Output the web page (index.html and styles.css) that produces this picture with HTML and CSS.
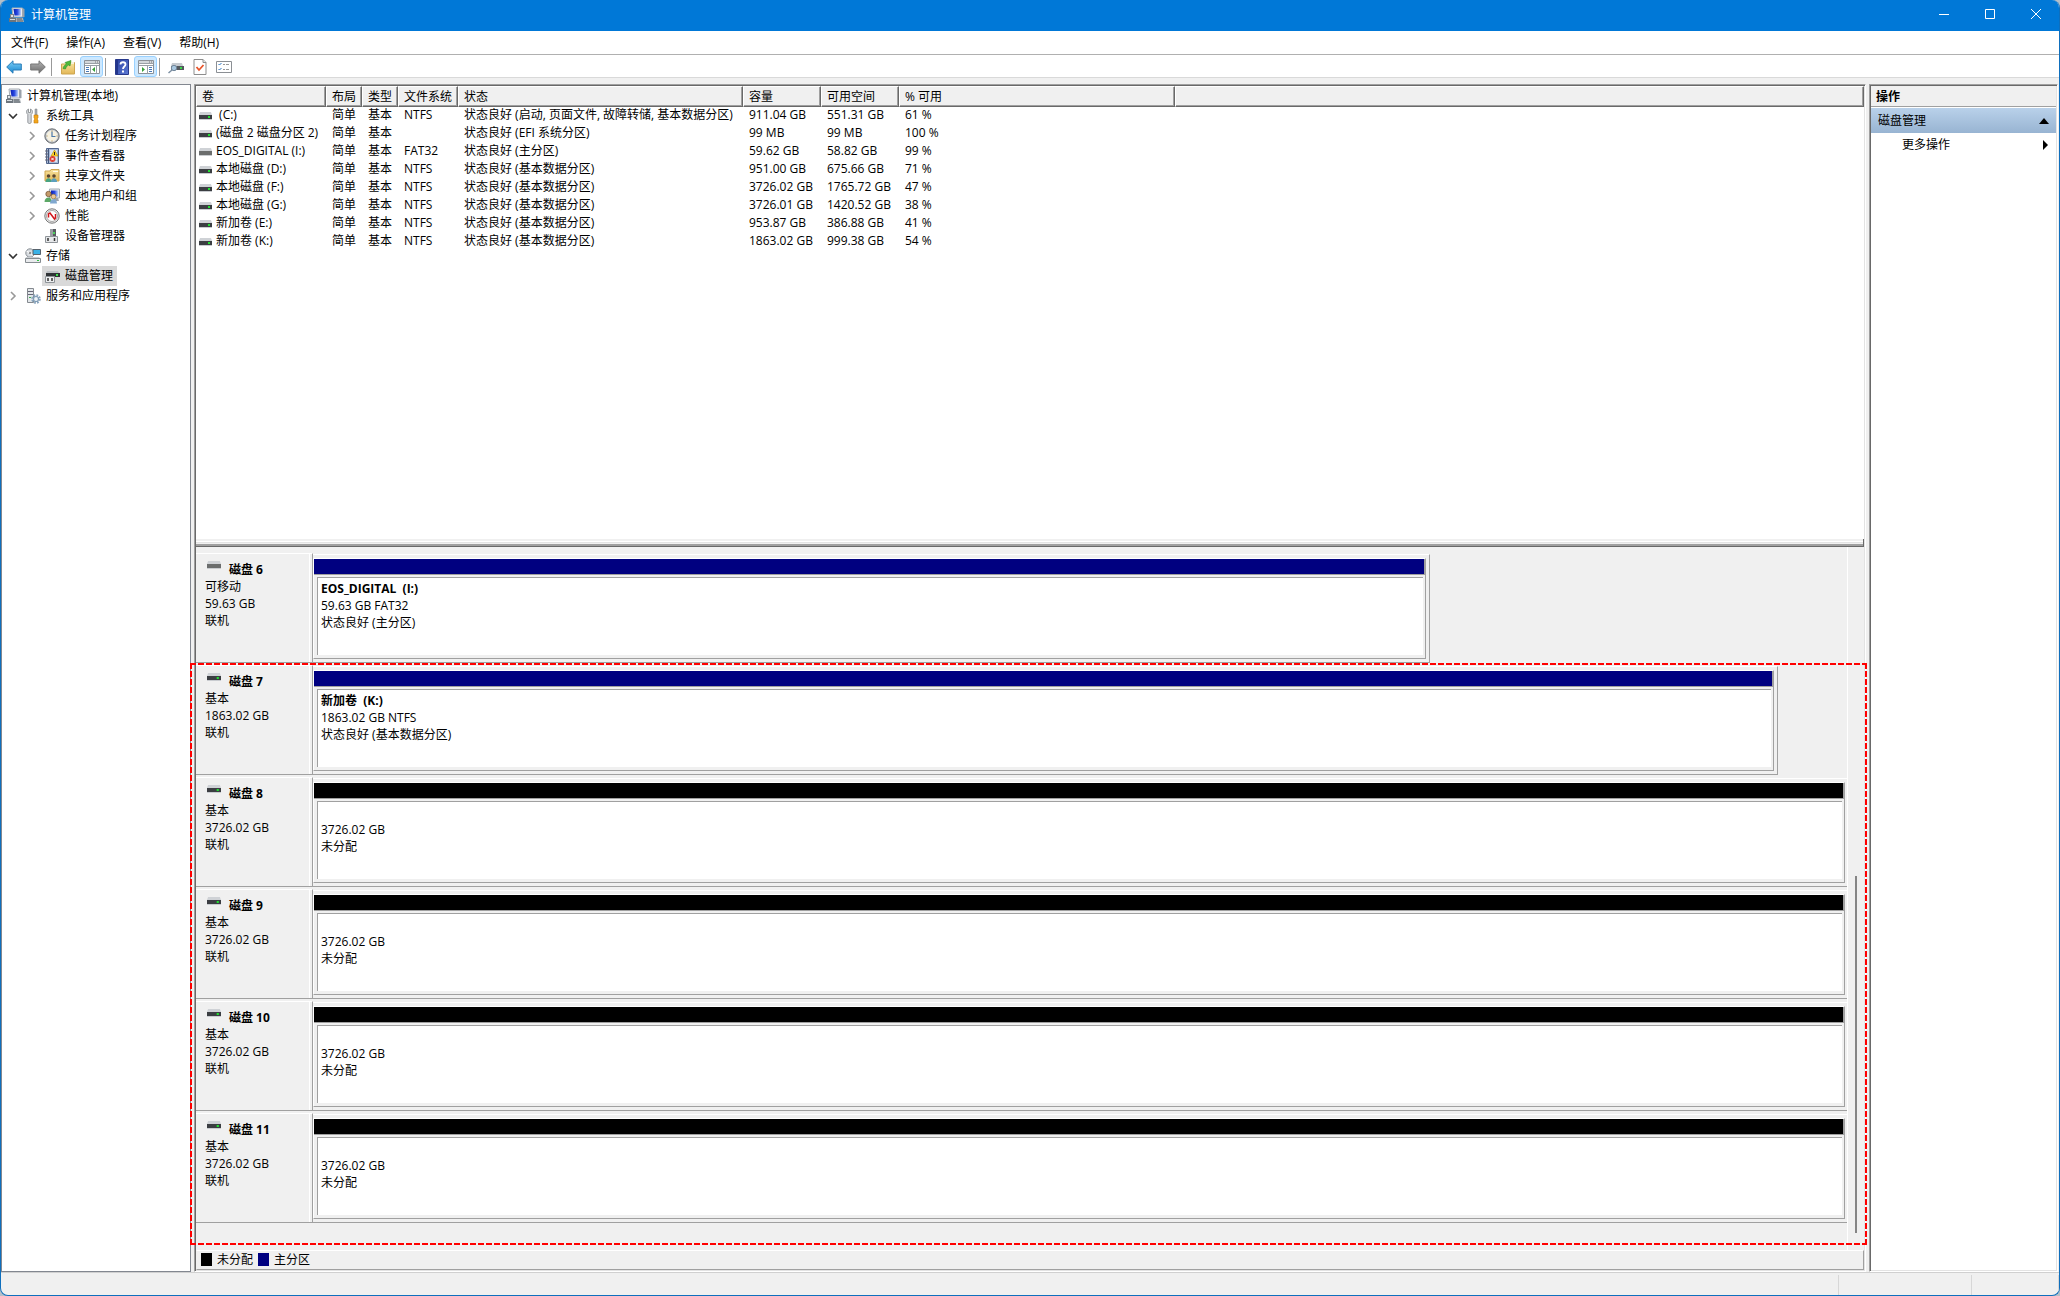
FILE: index.html
```html
<!DOCTYPE html>
<html lang="zh-CN">
<head>
  <meta charset="utf-8">
  <title>计算机管理</title>
  <link rel="stylesheet" href="styles.css">
</head>
<body>

<svg class="sprite" aria-hidden="true">
  <defs>
    <linearGradient id="gBlue" x1="0" y1="0" x2="0" y2="1"><stop offset="0" stop-color="#7fd0f7"/><stop offset="1" stop-color="#1585cf"/></linearGradient>
    <linearGradient id="gGray" x1="0" y1="0" x2="0" y2="1"><stop offset="0" stop-color="#b5b5b5"/><stop offset="1" stop-color="#6b6b6b"/></linearGradient>
    <linearGradient id="gScreen" x1="0" y1="0" x2="1" y2="0"><stop offset="0" stop-color="#0a1fb4"/><stop offset=".5" stop-color="#2747e0"/><stop offset="1" stop-color="#b9d0fa"/></linearGradient>
    <linearGradient id="gHelp" x1="0" y1="0" x2="1" y2="1"><stop offset="0" stop-color="#2a3f9e"/><stop offset="1" stop-color="#5d7bd6"/></linearGradient>
    <linearGradient id="gFolder" x1="0" y1="0" x2="0" y2="1"><stop offset="0" stop-color="#f8e3a0"/><stop offset="1" stop-color="#e3b756"/></linearGradient>
  </defs>
  <symbol id="computer" viewBox="0 0 16 16">
    <path d="M3 1h10.500v9H4z" fill="#e8ebef" stroke="#a7adb5"/>
    <path d="M4.500 2h7.500v6.500H5.500z" fill="url(#gScreen)"/>
    <path d="M13.500 1l2 1v8l-2 .5z" fill="#9aa1aa"/>
    <path d="M1 7h4v4H1z" fill="#7c848c"/><path d="M2 8h2v2H2z" fill="#dfe4e8"/>
    <path d="M0 11h7v4H0z" fill="#6d757d"/><path d="M1 12h5v1H1z" fill="#d5dade"/>
    <path d="M7 11h7l1 4H7z" fill="#a9afb5"/><path d="M8 12h5M8 14h6" stroke="#5c646b"/>
  </symbol>
  <symbol id="back" viewBox="0 0 16 16"><path d="M.7 8L7 1.800V5h8.300v6H7v3.200z" fill="url(#gBlue)" stroke="#2a7db8" stroke-linejoin="round"/></symbol>
  <symbol id="forward" viewBox="0 0 16 16"><path d="M15.300 8L9 1.800V5H.7v6H9v3.200z" fill="url(#gGray)" stroke="#777" stroke-linejoin="round"/></symbol>
  <symbol id="up" viewBox="0 0 16 16">
    <path d="M1.500 5h5l1-1.500h7V15h-13z" fill="url(#gFolder)" stroke="#cda550"/>
    <path d="M11 3h3v2h-3z" fill="#f6f0da"/>
    <path d="M3 9.500C3.500 7 5 6 6.500 5L5 3.500 11 1.500 10 7 8.500 6C7 7 6 8 5.500 10z" fill="#4fba3c" stroke="#2e8d23" stroke-width=".6"/>
  </symbol>
  <symbol id="tree-pane" viewBox="0 0 16 14">
    <path d="M.5.500h15v13H.5z" fill="#fff" stroke="#8b9198"/><path d="M1 1h14v2H1z" fill="#d2d6da"/><path d="M11 2h1M13 2h1" stroke="#777"/>
    <path d="M.5 3.500h15M6.500 5.500v8M1 5.500h14" stroke="#9aa0a6"/><path d="M2 7.500h3M2 9.500h3M2 11.500h3" stroke="#4779b8"/><path d="M11 7v5L8 9.500z" fill="#36a13a"/>
    <path d="M12.500 6v7.500" stroke="#9aa0a6"/>
  </symbol>
  <symbol id="action-pane" viewBox="0 0 16 14">
    <path d="M.5.500h15v13H.5z" fill="#fff" stroke="#8b9198"/><path d="M1 1h14v2H1z" fill="#d2d6da"/><path d="M11 2h1M13 2h1" stroke="#777"/>
    <path d="M.5 3.500h15M9.500 5.500v8M1 5.500h14" stroke="#9aa0a6"/><path d="M11 7.500h3M11 9.500h3M11 11.500h3" stroke="#4779b8"/><path d="M4 7v5l3-2.500z" fill="#36a13a"/>
  </symbol>
  <symbol id="help" viewBox="0 0 14 16">
    <path d="M.5.500h13v15H.5z" fill="url(#gHelp)" stroke="#28398c"/><path d="M1 1h2v14H1z" fill="#22358b"/>
    <path d="M5.500 5.500C5.500 2.500 10.500 2.500 10.500 5.500 10.500 7.500 8 7.500 8 10" fill="none" stroke="#fff" stroke-width="1.800"/><path d="M7 11.500h2v2H7z" fill="#fff"/>
  </symbol>
  <symbol id="drive-find" viewBox="0 0 16 14">
    <path d="M4 3h10l1 3H3z" fill="#c6cacf"/><path d="M3 6h13v4H3z" fill="#53585d"/><path d="M12 7h2v2h-2z" fill="#3bd64b"/>
    <circle cx="6" cy="8" r="2.700" fill="#a9c8e0" stroke="#73879a"/><path d="M4 10l-3.500 3" stroke="#7c8fa3" stroke-width="1.500"/>
  </symbol>
  <symbol id="doc-check" viewBox="0 0 13 16"><path d="M.5.500h9l3 3v12H.5z" fill="#fff" stroke="#8d8d8d"/><path d="M9.500.500v3h3" fill="#e4e4e4" stroke="#8d8d8d"/><path d="M3 8l2.500 3 4.500-5" fill="none" stroke="#e8542a" stroke-width="1.800"/></symbol>
  <symbol id="list" viewBox="0 0 16 12"><path d="M.5.500h15v11H.5z" fill="#fff" stroke="#8b8f94"/><path d="M2.500 3l1 1L5.500 2M2.500 8l1 1L5.500 7" fill="none" stroke="#2f77c2"/><path d="M7 3.500h2M10 3.500h3M7 8.500h2M10 8.500h3" stroke="#999"/></symbol>
  <symbol id="tools" viewBox="0 0 16 16">
    <path d="M3.500 1v3.500h2V1C8 2 8 5 6.200 6.500V14c0 2-3.400 2-3.400 0V6.500C1 5 1 2 3.500 1z" fill="#d4d7da" stroke="#83888c" stroke-width=".8"/>
    <path d="M10 1h2v6h-2z" fill="#a8adb2" stroke="#7c8185" stroke-width=".5"/><path d="M9 7h4v3l-1 1 1 1v3H9v-3l1-1-1-1z" fill="#f2a51c" stroke="#c67d0c" stroke-width=".6"/>
  </symbol>
  <symbol id="clock" viewBox="0 0 16 16"><circle cx="8" cy="8" r="7.200" fill="#989ca1" stroke="#73777b"/><circle cx="8" cy="8" r="5.800" fill="#f7f1df" stroke="#d9dcdf"/><path d="M8 3.500V8.500h3.500" fill="none" stroke="#4a78aa" stroke-width="1.200"/><path d="M8 2.500v1M8 12.500v1M2.500 8h1M12.500 8h1" stroke="#a88d4c"/></symbol>
  <symbol id="events" viewBox="0 0 16 16">
    <path d="M2.500.500h12v15h-12z" fill="#a9bad6" stroke="#53678d"/><path d="M4.500 1v14" stroke="#43567c"/><path d="M6 2h7v12H6z" fill="#dbe4f1"/>
    <path d="M1 3h3M1 6h3M1 9h3M1 12h3" stroke="#667"/><path d="M10.500 2l3.500 6H7z" fill="#ffd428" stroke="#b9900a" stroke-width=".6"/><path d="M10.500 4v3" stroke="#222"/>
    <circle cx="8.500" cy="11" r="3" fill="#dc3b2d"/><path d="M7.300 9.800l2.400 2.400M9.700 9.800l-2.400 2.400" stroke="#fff"/>
  </symbol>
  <symbol id="shared" viewBox="0 0 16 16">
    <path d="M1 3h5l1-1.500h8V13H1z" fill="url(#gFolder)" stroke="#cda550"/><path d="M9 3h5v1H9z" fill="#fffbe8"/>
    <circle cx="4.500" cy="8" r="1.800" fill="#5a4631"/><path d="M1.500 14c0-5 6-5 6 0z" fill="#48a482"/><circle cx="10" cy="8" r="1.800" fill="#5a4631"/><path d="M7 14c0-5 6-5 6 0z" fill="#5b9fbd"/>
  </symbol>
  <symbol id="users" viewBox="0 0 16 16">
    <path d="M5.500 1h10v9h-10z" fill="#dfe4ea" stroke="#a3abb4"/><path d="M7 2.500h7v6H7z" fill="url(#gScreen)"/><path d="M10 10h4l1 3h-5z" fill="#9ca3aa"/>
    <circle cx="4.500" cy="6" r="2.700" fill="#c49a6b" stroke="#6d4b2b" stroke-width=".7"/><path d="M.5 14c0-6 7.500-6 7.500 0z" fill="#5ca867"/>
    <circle cx="9.500" cy="8.500" r="2.300" fill="#edc795" stroke="#a07c3c" stroke-width=".7"/><path d="M6 15.500c0-6 7-6 7 0z" fill="#80a8d0"/>
  </symbol>
  <symbol id="perf" viewBox="0 0 16 16"><circle cx="8" cy="8" r="7.200" fill="#ededed" stroke="#777"/><circle cx="8" cy="8" r="5.500" fill="#fff" stroke="#aaa"/><path d="M4.500 9.500V6L6 5l4.500 6 1-1V6" fill="none" stroke="#d1161b" stroke-width="1.500"/></symbol>
  <symbol id="device" viewBox="0 0 16 16">
    <path d="M6 1h6v9H6z" fill="#575b60"/><path d="M6 1h3v9H6z" fill="#9a9ea3"/><path d="M9 4h2v2H9z" fill="#4bd05a"/>
    <path d="M1.500 8.500h12v6h-12z" fill="#e6e8ea" stroke="#8f9499"/><path d="M4 10v3M10.500 10v3" stroke="#333" stroke-width="1.500"/>
  </symbol>
  <symbol id="storage" viewBox="0 0 16 16">
    <circle cx="5" cy="5" r="4.200" fill="#d8dce0" stroke="#888e94"/><path d="M5 5l-3.500-2M5 5l3 2.500" stroke="#fff"/><circle cx="5" cy="5" r="1" fill="#777"/>
    <path d="M8 1.500h7.500v5H8z" fill="#39b1e6" stroke="#57636d"/><path d="M1 9h13l1.500 2H0z" fill="#c9cdd1"/><path d="M.5 10.500h15v4H.5z" fill="#e9ebed" stroke="#868c91"/><path d="M12 12h2v1h-2z" fill="#2fc242"/>
  </symbol>
  <symbol id="disk-mgmt" viewBox="0 0 16 16">
    <path d="M3 3h11l1 2H2z" fill="#bcc0c4"/><path d="M2 5h14v4H2z" fill="#303336"/><path d="M12 6h2v2h-2z" fill="#3ee04c"/>
    <path d="M1.500 8.500h9v6h-9z" fill="#eceeef" stroke="#8f9499"/><path d="M4 10v3M8 10v3" stroke="#333" stroke-width="1.500"/>
  </symbol>
  <symbol id="services" viewBox="0 0 16 16">
    <path d="M2.500.500h6v14h-6z" fill="#e3e7ea" stroke="#84898f"/><path d="M3 3.500h5M3 6.500h5" stroke="#667"/><path d="M4 9.500h2" stroke="#3bae4b"/>
    <circle cx="11" cy="11" r="3.600" fill="none" stroke="#8aa5bd" stroke-width="2.400" stroke-dasharray="1.700 1.120"/><circle cx="11" cy="11" r="2.500" fill="#f0f5f9" stroke="#7f9bb5" stroke-width="1.200"/>
  </symbol>
  <symbol id="volume" viewBox="0 0 13 8" preserveAspectRatio="none"><path d="M1 0h11l1 3H0z" fill="#cfd2d6"/><path d="M0 3h13v4H0z" fill="#3b3e42"/><path d="M0 7h13v1H0z" fill="#c9ccd0"/><path d="M9 4h2v2H9z" fill="#22e032"/></symbol>
  <symbol id="removable" viewBox="0 0 13 8" preserveAspectRatio="none"><path d="M1 0h11l1 3H0z" fill="#cfd2d6"/><path d="M0 3h13v4H0z" fill="#6b6d6d"/><path d="M0 7h13v1H0z" fill="#c9ccd0"/></symbol>
  <symbol id="open" viewBox="0 0 10 10"><path d="M1 3l4 4 4-4" fill="none" stroke="#333" stroke-width="1.600"/></symbol>
  <symbol id="closed" viewBox="0 0 10 10"><path d="M3 1l4 4-4 4" fill="none" stroke="#999" stroke-width="1.600"/></symbol>
</svg>

<div class="window">
  <header class="titlebar">
    <svg class="icon"><use href="#computer"/></svg>
    <h1>计算机管理</h1>
    <div class="window-buttons">
      <button aria-label="最小化"><svg viewBox="0 0 10 10"><path d="M0 5.500h10"/></svg></button>
      <button aria-label="最大化"><svg viewBox="0 0 10 10"><path d="M.5.500h9v9h-9z"/></svg></button>
      <button aria-label="关闭"><svg viewBox="0 0 10 10"><path d="M0 0l10 10M10 0L0 10"/></svg></button>
    </div>
  </header>

  <nav class="menubar">
    <button>文件(F)</button>
    <button>操作(A)</button>
    <button>查看(V)</button>
    <button>帮助(H)</button>
  </nav>

  <div class="toolbar">
    <button aria-label="后退"><svg class="icon"><use href="#back"/></svg></button>
    <button aria-label="前进"><svg class="icon"><use href="#forward"/></svg></button>
    <span class="sep"></span>
    <button aria-label="向上"><svg class="icon"><use href="#up"/></svg></button>
    <button class="on" aria-label="显示控制台树"><svg class="icon"><use href="#tree-pane"/></svg></button>
    <span class="sep"></span>
    <button aria-label="帮助"><svg class="icon"><use href="#help"/></svg></button>
    <button class="on" aria-label="显示操作窗格"><svg class="icon"><use href="#action-pane"/></svg></button>
    <span class="sep"></span>
    <button aria-label="重新扫描磁盘"><svg class="icon"><use href="#drive-find"/></svg></button>
    <button aria-label="属性"><svg class="icon"><use href="#doc-check"/></svg></button>
    <button aria-label="设置"><svg class="icon"><use href="#list"/></svg></button>
  </div>

  <main class="panes">
    <ul class="tree">
      <li class="root"><svg class="icon"><use href="#computer"/></svg><span>计算机管理(本地)</span></li>
      <li class="level1"><svg class="arrow"><use href="#open"/></svg><svg class="icon"><use href="#tools"/></svg><span>系统工具</span></li>
      <li class="level2"><svg class="arrow"><use href="#closed"/></svg><svg class="icon"><use href="#clock"/></svg><span>任务计划程序</span></li>
      <li class="level2"><svg class="arrow"><use href="#closed"/></svg><svg class="icon"><use href="#events"/></svg><span>事件查看器</span></li>
      <li class="level2"><svg class="arrow"><use href="#closed"/></svg><svg class="icon"><use href="#shared"/></svg><span>共享文件夹</span></li>
      <li class="level2"><svg class="arrow"><use href="#closed"/></svg><svg class="icon"><use href="#users"/></svg><span>本地用户和组</span></li>
      <li class="level2"><svg class="arrow"><use href="#closed"/></svg><svg class="icon"><use href="#perf"/></svg><span>性能</span></li>
      <li class="level2 leaf"><svg class="icon"><use href="#device"/></svg><span>设备管理器</span></li>
      <li class="level1"><svg class="arrow"><use href="#open"/></svg><svg class="icon"><use href="#storage"/></svg><span>存储</span></li>
      <li class="level2 leaf selected"><svg class="icon"><use href="#disk-mgmt"/></svg><span>磁盘管理</span></li>
      <li class="level1"><svg class="arrow"><use href="#closed"/></svg><svg class="icon"><use href="#services"/></svg><span>服务和应用程序</span></li>
    </ul>

    <section class="center sunken">
      <div class="volumes">
        <table>
          <colgroup>
            <col class="c-name"><col class="c-short"><col class="c-short"><col class="c-fs"><col class="c-status"><col class="c-size"><col class="c-size"><col class="c-free"><col>
          </colgroup>
          <thead>
            <tr><th>卷</th><th>布局</th><th>类型</th><th>文件系统</th><th>状态</th><th>容量</th><th>可用空间</th><th>% 可用</th><th></th></tr>
          </thead>
          <tbody>
            <tr><td><svg class="disk-icon"><use href="#volume"/></svg>&nbsp;(C:)</td><td>简单</td><td>基本</td><td>NTFS</td><td>状态良好 (启动, 页面文件, 故障转储, 基本数据分区)</td><td>911.04 GB</td><td>551.31 GB</td><td>61 %</td><td></td></tr>
            <tr><td><svg class="disk-icon"><use href="#volume"/></svg>(磁盘 2 磁盘分区 2)</td><td>简单</td><td>基本</td><td></td><td>状态良好 (EFI 系统分区)</td><td>99 MB</td><td>99 MB</td><td>100 %</td><td></td></tr>
            <tr><td><svg class="disk-icon"><use href="#removable"/></svg>EOS_DIGITAL (I:)</td><td>简单</td><td>基本</td><td>FAT32</td><td>状态良好 (主分区)</td><td>59.62 GB</td><td>58.82 GB</td><td>99 %</td><td></td></tr>
            <tr><td><svg class="disk-icon"><use href="#volume"/></svg>本地磁盘 (D:)</td><td>简单</td><td>基本</td><td>NTFS</td><td>状态良好 (基本数据分区)</td><td>951.00 GB</td><td>675.66 GB</td><td>71 %</td><td></td></tr>
            <tr><td><svg class="disk-icon"><use href="#volume"/></svg>本地磁盘 (F:)</td><td>简单</td><td>基本</td><td>NTFS</td><td>状态良好 (基本数据分区)</td><td>3726.02 GB</td><td>1765.72 GB</td><td>47 %</td><td></td></tr>
            <tr><td><svg class="disk-icon"><use href="#volume"/></svg>本地磁盘 (G:)</td><td>简单</td><td>基本</td><td>NTFS</td><td>状态良好 (基本数据分区)</td><td>3726.01 GB</td><td>1420.52 GB</td><td>38 %</td><td></td></tr>
            <tr><td><svg class="disk-icon"><use href="#volume"/></svg>新加卷 (E:)</td><td>简单</td><td>基本</td><td>NTFS</td><td>状态良好 (基本数据分区)</td><td>953.87 GB</td><td>386.88 GB</td><td>41 %</td><td></td></tr>
            <tr><td><svg class="disk-icon"><use href="#volume"/></svg>新加卷 (K:)</td><td>简单</td><td>基本</td><td>NTFS</td><td>状态良好 (基本数据分区)</td><td>1863.02 GB</td><td>999.38 GB</td><td>54 %</td><td></td></tr>
          </tbody>
        </table>
      </div>

      <div class="splitter"></div>

      <div class="disk-view">
        <div class="disks">
          <div class="disk">
            <div class="disk-label">
              <h2><svg class="disk-icon"><use href="#removable"/></svg>磁盘 6</h2>
              <p>可移动</p><p>59.63 GB</p><p>联机</p>
            </div>
            <div class="frame" style="width: 72.8%">
              <div class="partition primary">
                <div class="bar"></div>
                <div class="info"><h3>EOS_DIGITAL&nbsp; (I:)</h3><p>59.63 GB FAT32</p><p>状态良好 (主分区)</p></div>
              </div>
            </div>
          </div>
          <div class="disk">
            <div class="disk-label">
              <h2><svg class="disk-icon"><use href="#volume"/></svg>磁盘 7</h2>
              <p>基本</p><p>1863.02 GB</p><p>联机</p>
            </div>
            <div class="frame" style="width: 95.5%">
              <div class="partition primary">
                <div class="bar"></div>
                <div class="info"><h3>新加卷&nbsp; (K:)</h3><p>1863.02 GB NTFS</p><p>状态良好 (基本数据分区)</p></div>
              </div>
            </div>
          </div>
          <div class="disk">
            <div class="disk-label">
              <h2><svg class="disk-icon"><use href="#volume"/></svg>磁盘 8</h2>
              <p>基本</p><p>3726.02 GB</p><p>联机</p>
            </div>
            <div class="frame full">
              <div class="partition unallocated">
                <div class="bar"></div>
                <div class="info"><p>3726.02 GB</p><p>未分配</p></div>
              </div>
            </div>
          </div>
          <div class="disk">
            <div class="disk-label">
              <h2><svg class="disk-icon"><use href="#volume"/></svg>磁盘 9</h2>
              <p>基本</p><p>3726.02 GB</p><p>联机</p>
            </div>
            <div class="frame full">
              <div class="partition unallocated">
                <div class="bar"></div>
                <div class="info"><p>3726.02 GB</p><p>未分配</p></div>
              </div>
            </div>
          </div>
          <div class="disk">
            <div class="disk-label">
              <h2><svg class="disk-icon"><use href="#volume"/></svg>磁盘 10</h2>
              <p>基本</p><p>3726.02 GB</p><p>联机</p>
            </div>
            <div class="frame full">
              <div class="partition unallocated">
                <div class="bar"></div>
                <div class="info"><p>3726.02 GB</p><p>未分配</p></div>
              </div>
            </div>
          </div>
          <div class="disk">
            <div class="disk-label">
              <h2><svg class="disk-icon"><use href="#volume"/></svg>磁盘 11</h2>
              <p>基本</p><p>3726.02 GB</p><p>联机</p>
            </div>
            <div class="frame full">
              <div class="partition unallocated">
                <div class="bar"></div>
                <div class="info"><p>3726.02 GB</p><p>未分配</p></div>
              </div>
            </div>
          </div>
        </div>
        <div class="scrollbar"><div class="thumb"></div></div>
        <div class="highlight"></div>
      </div>

      <div class="legend">
        <span class="swatch unallocated"></span><span>未分配</span>
        <span class="swatch primary"></span><span>主分区</span>
      </div>
    </section>

    <aside class="actions sunken">
      <h2>操作</h2>
      <button class="group">磁盘管理<svg viewBox="0 0 10 10"><path d="M5 2l5 6H0z"/></svg></button>
      <button class="more">更多操作<svg viewBox="0 0 10 10"><path d="M4 0l5 5-5 5z"/></svg></button>
    </aside>
  </main>

  <footer class="statusbar"><span></span><span></span><span></span></footer>
</div>

</body>
</html>
```

FILE: styles.css
```css
* {
  box-sizing: border-box;
}

body {
  --face: #f0f0f0;
  --shadow: #a0a0a0;
  --dark: #696969;
  --light: #e3e3e3;
  margin: 0;
  background: #b4bfc9;
  color: #000;
  font: 12px/17px "Open Sans", "Noto Sans CJK SC", sans-serif;
}

h1, h2, h3, p, ul {
  margin: 0;
  padding: 0;
  font-size: 12px;
}

h1 {
  font-weight: normal;
}

button {
  padding: 0;
  border: 0;
  background: none;
  color: inherit;
  font: inherit;
}

.sprite {
  position: absolute;
  width: 0;
  height: 0;
}

.icon {
  flex: none;
  width: 16px;
  height: 16px;
}

.window {
  display: flex;
  flex-direction: column;
  min-height: 100vh;
  border: 1px solid #0f6fbd;
  border-top: 0;
  border-radius: 8px;
  background: var(--face);
  overflow: hidden;
}

.titlebar {
  display: flex;
  align-items: center;
  gap: 6px;
  height: 31px;
  padding: 0 0 2px 8px;
  background: #0078d7;
  color: #fff;
}

.window-buttons {
  display: flex;
  align-self: stretch;
  margin-left: auto;
}

.window-buttons button {
  width: 46px;
}

.window-buttons svg {
  width: 10px;
  height: 10px;
  fill: none;
  stroke: #fff;
}

.menubar {
  display: flex;
  gap: 18px;
  height: 24px;
  padding-left: 10px;
  border-bottom: 1px solid #b0b0b0;
  background: #fff;
}

.toolbar {
  display: flex;
  align-items: center;
  gap: 1px;
  height: 23px;
  padding: 1px 0 0 1px;
  border-bottom: 1px solid #d9d9d9;
  background: #fff;
}

.toolbar button {
  display: flex;
  align-items: center;
  justify-content: center;
  width: 23px;
  height: 21px;
}

.toolbar .on {
  border: 1px solid #99d1ff;
  border-radius: 3px;
  background: #cce8ff;
}

.sep {
  width: 1px;
  height: 18px;
  margin: 0 3px 0 1px;
  background: #999;
}

.panes {
  display: grid;
  grid-template-columns: 190px 1fr 189px;
  gap: 3px;
  flex: 1;
  padding: 6px 1px 0 0;
}

.sunken {
  padding: 1px;
  border: 1px solid;
  border-color: var(--shadow) #fff #fff var(--shadow);
  box-shadow: inset 1px 1px var(--dark), inset -1px -1px var(--light);
}

/* tree */
.tree {
  border: 1px solid #828790;
  padding-top: 1px;
  background: #fff;
  list-style: none;
}

.tree li {
  display: flex;
  align-items: center;
  gap: 5px;
  height: 20px;
  padding-left: 4px;
}

.tree span {
  padding-bottom: 1px;
}

.tree .level1 {
  padding-left: 6px;
}

.tree .level2 {
  padding-left: 25px;
}

.tree .leaf {
  width: max-content;
  margin-left: 40px;
  padding: 0 4px 0 2px;
}

.tree .selected {
  background: #d9d9d9;
}

.arrow {
  width: 10px;
  height: 10px;
  margin-right: 2px;
}

/* volume list */
.center {
  display: flex;
  flex-direction: column;
  min-width: 0;
}

.volumes {
  flex: 1;
  background: #fff;
  overflow: hidden;
}

.volumes table {
  width: 100%;
  border-collapse: separate;
  border-spacing: 0;
  table-layout: fixed;
}

.c-name { width: 130px; }
.c-short { width: 36px; }
.c-fs { width: 60px; }
.c-status { width: 285px; }
.c-size { width: 78px; }
.c-free { width: 276px; }

.volumes th,
.volumes td {
  padding: 0 0 0 6px;
  font-weight: normal;
  text-align: left;
  white-space: nowrap;
}

.volumes th {
  height: 21px;
  padding-left: 5px;
  border: 1px solid;
  border-color: #fff var(--dark) var(--dark) #fff;
  background: var(--face);
  box-shadow: inset -1px -1px var(--shadow);
}

.volumes td {
  height: 18px;
  padding-bottom: 2px;
  line-height: 16px;
}

.volumes td:first-child {
  padding-left: 3px;
}

.disk-icon {
  width: 13px;
  height: 8px;
  margin-right: 4px;
  vertical-align: middle;
}

.splitter {
  height: 8px;
  border-bottom: 1px solid var(--dark);
  border-right: 1px solid var(--dark);
  background: linear-gradient(var(--face) 2px, #fff 2px 3px, var(--light) 3px 4px, var(--face) 4px 5px, var(--shadow) 5px);
}

/* graphical view */
.disk-view {
  position: relative;
  display: flex;
}

.disks {
  flex: 1;
  padding: 6px 0 25px;
  border-right: 1px solid #fff;
}

.disk {
  display: grid;
  grid-template-columns: 117px 1fr;
  margin-bottom: 2px;
}

.disk-label {
  padding: 7px 0 0 9px;
  border-top: 1px solid #fff;
  border-right: 1px solid var(--shadow);
  border-bottom: 1px solid var(--shadow);
  box-shadow: inset -2px 0 var(--face), inset -3px 0 #fff;
}

.disk-label h2 {
  display: flex;
  padding-left: 2px;
}

.disk-label .disk-icon {
  width: 14px;
  margin-right: 8px;
}

.frame {
  margin-top: 1px;
  padding: 3px 3px 3px 0;
  border: solid;
  border-width: 1px 1px 1px 0;
  border-color: #fff var(--shadow) var(--shadow);
}

.frame.full {
  padding-right: 2px;
  border-right: 0;
}

.partition {
  border: 1px solid;
  border-color: #fff var(--shadow) var(--shadow) #fff;
}

.bar {
  height: 16px;
  border-right: 1px solid var(--shadow);
  border-bottom: 1px solid var(--shadow);
}

.primary .bar,
.swatch.primary {
  background: #000080;
}

.unallocated .bar,
.swatch.unallocated {
  background: #000;
}

.info {
  height: 78px;
  margin: 2px 2px 3px 3px;
  padding: 2px 0 0 3px;
  border: solid var(--shadow);
  border-width: 1px 0 0 1px;
  background: #fff;
}

.unallocated .info {
  padding-top: 19px;
}

.scrollbar {
  display: flex;
  justify-content: center;
  width: 16px;
  padding-bottom: 17px;
}

.thumb {
  align-self: flex-end;
  width: 2px;
  height: 52%;
  background: #858585;
}

/* red dashed frame laid over disks 7 to 11 */
.highlight {
  --h: repeating-linear-gradient(90deg, #f00 0 6px, transparent 6px 8px);
  --v: repeating-linear-gradient(#f00 0 6px, transparent 6px 8px);
  position: absolute;
  top: 116px;
  right: -3px;
  bottom: 5px;
  left: -6px;
  background: var(--h) top / 100% 2px, var(--h) bottom / 100% 2px, var(--v) left / 2px 100%, var(--v) right / 2px 100%;
  background-repeat: no-repeat;
  pointer-events: none;
}

.legend {
  display: flex;
  align-items: center;
  gap: 5px;
  height: 20px;
  padding: 0 0 1px 4px;
  border: 1px solid;
  border-color: #fff var(--shadow) var(--shadow) var(--face);
}

.swatch {
  width: 11px;
  height: 13px;
}

/* actions */
.actions {
  background: #fff;
}

.actions h2 {
  height: 21px;
  padding: 2px 0 0 5px;
  border-bottom: 1px solid var(--shadow);
  background: var(--face);
}

.actions button {
  display: flex;
  align-items: center;
  justify-content: space-between;
  width: 100%;
  padding: 0 7px;
}

.actions svg {
  width: 10px;
  height: 10px;
}

.actions .group {
  height: 25px;
  margin-top: 1px;
  background: linear-gradient(#b9d1ea, #98b4d2);
}

.actions .more {
  height: 23px;
  padding-left: 31px;
}

/* status bar */
.statusbar {
  display: grid;
  grid-template-columns: 1fr 133px 87px;
  height: 23px;
  padding-top: 2px;
  border-top: 1px solid #d0d0d0;
}

.statusbar span {
  border-right: 1px solid #d7d7d7;
}
```
